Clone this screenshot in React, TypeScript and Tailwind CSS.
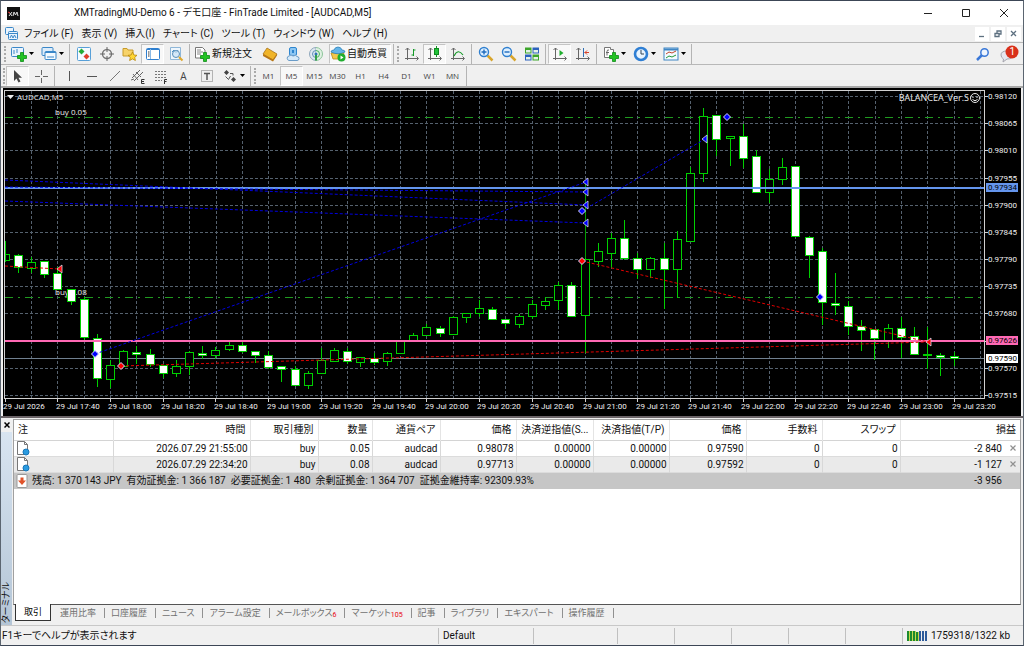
import { ReactNode } from "react";

type Candle = [high: number, top: number, bottom: number, low: number, filled?: 1];

// high, body top, body bottom, low; 1 = bearish (filled) body
const CANDLES: Candle[] = [
  [241, 254, 260, 261], [254, 255, 267, 272, 1], [257, 262, 268, 272], [261, 261, 274, 277, 1],
  [267, 273, 289, 289, 1], [289, 289, 301, 304, 1], [297, 299, 337, 340, 1], [334, 338, 378, 386, 1],
  [360, 365, 379, 387], [350, 351, 366, 366], [346, 352, 354, 363, 1], [349, 354, 364, 366, 1],
  [365, 365, 373, 377, 1], [360, 366, 373, 376], [351, 352, 366, 374], [346, 353, 355, 358, 1],
  [347, 350, 355, 358], [342, 345, 349, 350], [341, 345, 351, 352, 1], [351, 351, 355, 362, 1],
  [351, 355, 367, 368, 1], [366, 366, 369, 381, 1], [366, 369, 385, 385, 1], [371, 373, 385, 388],
  [348, 360, 373, 373], [348, 350, 361, 361], [348, 351, 361, 363, 1], [357, 357, 362, 366],
  [353, 358, 362, 364, 1], [352, 353, 361, 365], [341, 341, 353, 353], [333, 335, 340, 340],
  [324, 327, 335, 335], [326, 328, 333, 336, 1], [316, 317, 334, 334], [313, 313, 317, 322],
  [300, 308, 313, 316], [307, 309, 319, 319, 1], [319, 319, 323, 328, 1], [314, 316, 324, 327],
  [300, 304, 316, 318], [297, 301, 305, 309], [282, 285, 300, 309], [282, 285, 316, 316, 1],
  [180, 259, 315, 352], [243, 251, 261, 266], [233, 238, 253, 267], [220, 238, 258, 259, 1],
  [253, 258, 269, 278, 1], [257, 258, 269, 277], [243, 258, 269, 308, 1], [231, 239, 269, 297],
  [167, 173, 241, 241], [108, 116, 173, 181], [115, 115, 139, 155, 1], [136, 136, 138, 165],
  [124, 136, 158, 167, 1], [150, 156, 192, 192, 1], [169, 179, 192, 202], [158, 167, 179, 184],
  [166, 166, 236, 236, 1], [236, 237, 255, 277, 1], [248, 251, 302, 324, 1], [273, 303, 305, 314, 1],
  [301, 306, 326, 334, 1], [320, 326, 330, 350, 1], [329, 329, 338, 359, 1], [324, 328, 340, 347],
  [317, 328, 337, 357, 1], [327, 336, 354, 354, 1], [327, 354, 355, 368], [353, 355, 357, 375, 1],
  [352, 356, 358, 365, 1],
];

const TIMES = [
  "29 Jul 2026", "29 Jul 17:40", "29 Jul 18:00", "29 Jul 18:20", "29 Jul 18:40", "29 Jul 19:00",
  "29 Jul 19:20", "29 Jul 19:40", "29 Jul 20:00", "29 Jul 20:20", "29 Jul 20:40", "29 Jul 21:00",
  "29 Jul 21:20", "29 Jul 21:40", "29 Jul 22:00", "29 Jul 22:20", "29 Jul 22:40", "29 Jul 23:00",
  "29 Jul 23:20",
];

const PRICES = [
  "0.98120", "0.98065", "0.98010", "0.97955", "0.97900", "0.97845",
  "0.97790", "0.97735", "0.97680", "", "0.97570", "0.97515",
];

const TRADES = [
  { color: "#0000e0", d: "M5 180L586 205M5 201L586 223M5 187L586 192M95 354L586 182M582 211L705 139" },
  { color: "#e00000", d: "M5 266L59 269M121 366L928 342M582 261L928 342" },
];

const ENTRIES = [
  [95, 354, "#0000ff"], [582, 211, "#0000ff"], [727, 117, "#0000ff"], [820, 297, "#0000ff"],
  [121, 366, "#ff0000"], [582, 261, "#ff0000"],
] as const;

const EXITS = [
  [586, 182, "#0000ff"], [586, 192, "#0000ff"], [586, 205, "#0000ff"], [586, 223, "#0000ff"],
  [705, 139, "#0000ff"], [60, 269, "#ff0000"], [929, 342, "#ff0000"],
] as const;

function Chart() {
  const gridX = Array.from({ length: 37 }, (_, i) => Math.round(31 + i * 26.36) + 0.5);
  const gridY = Array.from({ length: 12 }, (_, i) => Math.round(96 + i * 27.18) + 0.5);
  return (
    <svg
      viewBox="3 88 1018 328"
      className="block w-full bg-black font-['Roboto',sans-serif] text-[8px]"
      role="img"
      aria-label="AUDCAD,M5"
    >
      <g shapeRendering="crispEdges" fill="none">
        <g stroke="#55616e" strokeDasharray="3 2">
          {gridX.map((x) => <path key={x} d={`M${x} 91V398`} />)}
          {gridY.map((y) => <path key={y} d={`M5 ${y}H983`} />)}
        </g>
        <path d="M5 117.500H980M5 297.500H980" stroke="#1f9a1f" strokeDasharray="8 5 2 5" />
        <path d="M5 358.500H984" stroke="#708090" />
      </g>

      <g fill="#ededed" className="font-['Open_Sans',sans-serif]">
        <path d="M7 95h7l-3.500 4z" />
        <text x="17" y="100">AUDCAD,M5</text>
        <text x="55" y="115">buy 0.05</text>
        <text x="55" y="295">buy 0.08</text>
        <text x="969" y="101" textAnchor="end" className="text-[9px]">BALANCEA_Ver.S</text>
      </g>
      <g fill="none" stroke="#e8e8e8">
        <circle cx="975" cy="98" r="4.500" />
        <path d="M973 96.500v1.500M977 96.500v1.500M972.500 99.500q2.500 2.500 5 0" />
      </g>

      <g shapeRendering="crispEdges">
        {CANDLES.map(([high, top, bottom, low, filled], i) => {
          const x = Math.round(4.6 + i * 13.18);
          const left = Math.max(x - 4, 5);
          return (
            <g key={i} stroke="#00d000">
              <path d={`M${x + 0.5} ${high}V${low + 1}`} />
              <rect
                x={left + 0.5}
                y={top + 0.5}
                width={x + 4 - left}
                height={Math.max(bottom - top, 1)}
                fill={filled ? "#ffffff" : "#000000"}
              />
            </g>
          );
        })}
        <path d="M585.500 180V258" stroke="#00a000" />
        <path d="M5 187.500H984" stroke="#6495ed" strokeWidth="2" />
        <path d="M5 340.500H984" stroke="#ff69b4" strokeWidth="2" />
      </g>

      {TRADES.map((t) => (
        <path key={t.color} d={t.d} stroke={t.color} strokeDasharray="3 2" fill="none" />
      ))}
      {ENTRIES.map(([x, y, color]) => (
        <path
          key={`${x}-${y}`}
          d={`M${x - 3.5} ${y}l3.500 -3.500 3.500 3.500 -3.500 3.500z`}
          fill={color}
          stroke="#d8d8ff"
        />
      ))}
      {EXITS.map(([x, y, color]) => (
        <path key={`${x}-${y}`} d={`M${x - 3} ${y}l5 -4v8z`} fill={color} stroke="#d8d8e8" strokeWidth="0.8" />
      ))}

      <g shapeRendering="crispEdges" stroke="#d0d0d0" fill="none">
        <path d="M4.500 90.500H984.500V398.500H4.500z" />
        {gridY.map((y) => <path key={y} d={`M985 ${y}h3`} />)}
        {TIMES.map((t, i) => <path key={t} d={`M${Math.round(4.6 + i * 52.72) + 0.5} 399v3`} />)}
      </g>
      <g fill="#f0f0f0">
        {PRICES.map((p, i) => <text key={i} x="988" y={Math.round(99 + i * 27.18)}>{p}</text>)}
        {TIMES.map((t, i) => <text key={t} x={Math.round(3 + i * 52.72)} y="409">{t}</text>)}
      </g>
      <rect x="986" y="183" width="32" height="9" fill="#6495ed" />
      <rect x="986" y="336" width="32" height="9" fill="#ff69b4" />
      <rect x="986" y="354" width="32" height="9" fill="#ffffff" />
      <text x="988" y="190">0.97934</text>
      <text x="988" y="343">0.97626</text>
      <text x="988" y="361">0.97590</text>
    </svg>
  );
}

function Svg({ children }: { children: ReactNode }) {
  return (
    <svg viewBox="0 0 16 16" className="size-4 shrink-0" fill="none" stroke="#555" aria-hidden="true">
      {children}
    </svg>
  );
}

const Plus = () => (
  <path d="M9.500 6.500h3v3h3v3h-3v3h-3v-3h-3v-3h3z" fill="#22c322" stroke="#0d8a17" strokeWidth="0.8" />
);
const Axes = () => <path d="M3.500 2v12M1.500 4l2-2 2 2M1 12.500h13M12.500 10.500l2 2-2 2" stroke="#666" />;

const ICONS = {
  newChart: <Svg><rect x="0.500" y="1.500" width="12" height="9" rx="1" fill="#eaf4fd" stroke="#3a87c8" /><path d="M3 4v4M6 3v4" stroke="#3a87c8" /><Plus /></Svg>,
  profiles: <Svg><rect x="1" y="1.500" width="11" height="8" rx="1" fill="#dcecfa" stroke="#3a87c8" /><rect x="4" y="5.500" width="11" height="8" rx="1" fill="#f4faff" stroke="#3a87c8" /><path d="M4 6.500h11M6 11h7" stroke="#3a87c8" /></Svg>,
  market: <Svg><rect x="1.500" y="1.500" width="13" height="13" rx="1" fill="#f6fbff" stroke="#58a0d8" /><path d="M5.500 2.500L8.500 5.500 5.500 8.500 2.500 5.500z" fill="#23ad35" stroke="none" /><path d="M10.500 7.500l3 3-3 3-3-3z" fill="#e0402a" stroke="none" /></Svg>,
  crosshair: <Svg><circle cx="8" cy="8" r="4.500" stroke="#777" strokeWidth="1.400" /><path d="M8 1v5M8 10v5M1 8h5M10 8h5" stroke="#666" /></Svg>,
  navigator: <Svg><path d="M1 2.500h4l1 1.500h5v6H1z" fill="#f7d36a" stroke="#c79a2a" /><path d="M10.500 6l1.400 3 3.100.3-2.300 2.100.7 3.100-2.900-1.600-2.900 1.600.7-3.100L6 9.300l3.100-.3z" fill="#ffd633" stroke="#b8860b" strokeWidth="0.8" /></Svg>,
  terminal: <Svg><rect x="1.500" y="2.500" width="13" height="11" rx="1" fill="#fff" stroke="#2f7fcf" /><path d="M2 3.500h12" stroke="#2f7fcf" /><path d="M5.500 3v10" stroke="#8ab9e6" /><path d="M3 6h1.500M3 8h1.500M3 10h1.500" stroke="#333" /></Svg>,
  tester: <Svg><path d="M2.500 1.500h10v12h-10z" fill="#eef6fd" stroke="#8fb7d8" /><path d="M4 6l2-2 2 3 2-3" stroke="#4a8fc8" /><circle cx="8" cy="8" r="3.500" fill="#cfe6f8" fillOpacity="0.8" stroke="#5a8fb8" /><path d="M11 11l3.500 3.500" stroke="#e0a82a" strokeWidth="2" /></Svg>,
  order: <Svg><path d="M1.500 1.500h7l2.500 2.500v8H1.500z" fill="#fff" stroke="#777" /><path d="M3 4h4M3 6h6M3 8h4" stroke="#888" /><Plus /></Svg>,
  book: <Svg><path d="M5 2l10 6-4 6L1 8z" fill="#f0b429" stroke="#a8741a" strokeWidth="0.8" /><path d="M1 8v2l10 5.500 4-6V8l-4 5.500z" fill="#b87614" stroke="none" /></Svg>,
  cloud: <Svg><rect x="4.500" y="1.500" width="7" height="8" rx="1.500" fill="#8cc6f2" stroke="#2e86cf" /><path d="M7 4h2v3H7z" fill="#2e86cf" stroke="none" /><path d="M4 14.500a2.300 2.300 0 010-4.500q2-2 4 0 3-1.500 4 .5a2 2 0 010 4z" fill="#d6eaf9" stroke="#6a9cc8" /></Svg>,
  signal: <Svg><path d="M8 1.500a6.500 6.500 0 000 13V8z" stroke="#8fa7bb" fill="#dfe9f1" /><path d="M8 1.500a6.500 6.500 0 010 13" stroke="#8cc59a" fill="#dff0e2" /><path d="M8 4.500a3.500 3.500 0 010 7" stroke="#49b45c" /><path d="M8 4.500a3.500 3.500 0 000 7" stroke="#5d8fb8" /><circle cx="8" cy="8" r="1.500" fill="#2d74b5" stroke="none" /><path d="M8 9v5.500" stroke="#35a24a" strokeWidth="2" /></Svg>,
  auto: <Svg><path d="M1 7l2 6h8l3-6z" fill="#f3c64a" stroke="#b98a1c" strokeWidth="0.8" /><path d="M1 6q0-2 3-2 1-3 4-3t4 3q3 0 3 2-7 3.500-14 0z" fill="#63b4e8" stroke="#2c80b8" strokeWidth="0.8" /><circle cx="11.500" cy="11.500" r="4" fill="#1fae2e" stroke="none" /><path d="M10.500 9.500v4l3-2z" fill="#fff" stroke="none" /></Svg>,
  bars: <Svg><Axes /><path d="M9.500 3v7M9.500 4h2M7.500 9h2" stroke="#159a28" /></Svg>,
  candles: <Svg><Axes /><path d="M9.500 0v11" stroke="#159a28" /><rect x="7.500" y="2.500" width="4" height="6" fill="#22c33a" stroke="#0f8a1e" /></Svg>,
  line: <Svg><Axes /><path d="M4 10q4-8 9-1" stroke="#159a28" strokeWidth="1.200" /></Svg>,
  zoomIn: <Svg><path d="M9.500 9.500l5 5" stroke="#d8a52c" strokeWidth="2.500" /><circle cx="6" cy="6" r="4.500" fill="#dff0ff" stroke="#2f7fcf" strokeWidth="1.400" /><path d="M6 3.500v5M3.500 6h5" stroke="#1f6bbd" strokeWidth="1.400" /></Svg>,
  zoomOut: <Svg><path d="M9.500 9.500l5 5" stroke="#d8a52c" strokeWidth="2.500" /><circle cx="6" cy="6" r="4.500" fill="#dff0ff" stroke="#2f7fcf" strokeWidth="1.400" /><path d="M3.500 6h5" stroke="#1f6bbd" strokeWidth="1.400" /></Svg>,
  tile: <Svg><g stroke="none"><path d="M1 1.500h6.500v6H1zM8.500 8.500H15v6H8.500z" fill="#3da52a" /><path d="M8.500 1.500H15v6H8.500zM1 8.500h6.500v6H1z" fill="#2c62bd" /><path d="M2 4h4.500v2.500H2zM9.500 4H14v2.500H9.500zM2 11h4.500v2.500H2zM9.500 11H14v2.500H9.500z" fill="#e4f1e8" /></g></Svg>,
  scroll: <Svg><Axes /><path d="M7.500 4v6l4-3z" fill="#1fae2e" stroke="none" /></Svg>,
  shift: <Svg><Axes /><path d="M8.500 2v9" stroke="#2f6fb5" /><path d="M14 6.500H9.500M12 4.500l-2 2 2 2" stroke="#d5432b" /></Svg>,
  indicator: <Svg><path d="M1.500 1.500h6v2h3v8h-9z" fill="#fff" stroke="#777" /><path d="M6 4q-2-.5-2 1.500v4M3 6.500h3" stroke="#666" /><Plus /></Svg>,
  clock: <Svg><circle cx="8" cy="8" r="6" fill="#e8f4ff" stroke="#2f7fd4" strokeWidth="2.600" /><path d="M8 4v4h3" stroke="#345" /></Svg>,
  template: <Svg><rect x="1" y="2" width="14" height="12" fill="#f4faff" stroke="#3f86c4" /><path d="M1 3.500h14" stroke="#3f86c4" strokeWidth="2" /><path d="M3 8l3-2 3 1 4-2" stroke="#c0472d" /><path d="M3 12l3-2 3 1 4-2" stroke="#23993a" /></Svg>,
  cursor: <Svg><path d="M4 2v11l2.500-2.500 2 4 2-1-2-3.700H12z" fill="#444" stroke="none" /></Svg>,
  cross: <Svg><path d="M8.500 2v5M8.500 10v5M2 8.500h5M10 8.500h5" stroke="#666" /></Svg>,
  vline: <Svg><path d="M8.500 3v10" /></Svg>,
  hline: <Svg><path d="M3 8.500h10" /></Svg>,
  trend: <Svg><path d="M3 13L13 3" stroke="#777" /></Svg>,
  channel: <Svg><path d="M2 10l8-8M4 13l9-9M3 6l5 6M6 4l5 5M1 12l3-1" stroke="#666" /><path d="M14.500 11.500h-3v4h3M11.500 13.500h2.500" stroke="#333" /></Svg>,
  fibo: <Svg><path d="M2 3.500h12M2 6.500h12M2 9.500h12M2 12.500h7" stroke="#777" strokeDasharray="2 1" /><path d="M14 11.500h-2.500V16M11.500 13.500h2" stroke="#333" /></Svg>,
  label: <Svg><rect x="2.500" y="2.500" width="11" height="11" stroke="#777" strokeDasharray="1 1" /><path d="M5 5.500h6M8 5.500V12" strokeWidth="1.500" /></Svg>,
  arrows: <Svg><path d="M4.500 2l2.500 2.500L4.500 7 2 4.500zM11.500 9l2.500 2.500-2.500 2.500L9 11.500z" fill="#444" stroke="none" /><path d="M8 5.500h3v2M3.500 8.500l3 3 2-3.500" /></Svg>,
  doc: <Svg><path d="M2.500 1.500h7l3 3v10h-10z" fill="#fff" stroke="#777" /><path d="M9.500 1.500v3h3" stroke="#777" /><circle cx="11" cy="12" r="3" fill="#2a9be0" stroke="#1976b8" /></Svg>,
  balance: <Svg><rect x="3" y="1.500" width="10" height="13" rx="1" fill="#fff" stroke="#999" /><path d="M6.500 4.500h3v3H12L8 12 4 7.500h2.500z" fill="#e0532a" stroke="none" /></Svg>,
};

type IconName = keyof typeof ICONS;

function Tool({ icon, label, pressed, caret }: { icon: IconName; label: string; pressed?: boolean; caret?: boolean }) {
  return (
    <button
      aria-label={label}
      aria-pressed={pressed}
      className={`flex h-5 shrink-0 items-center justify-center gap-0.5 ${caret ? "w-[30px]" : "w-[23px]"} ${
        pressed ? "border border-[#c4c4c4] border-r-white border-b-white bg-[#f8f8f8]" : ""
      }`}
    >
      {ICONS[icon]}
      {caret && <Caret />}
    </button>
  );
}

const Caret = () => (
  <svg viewBox="0 0 5 3" className="w-[5px] shrink-0" aria-hidden="true"><path d="M0 0h5L2.500 3z" /></svg>
);
const Sep = () => <span className="mx-0.5 h-5 w-px shrink-0 bg-[#b4b4b4]" />;
const Grip = () => <span className="mx-px h-4 w-0.5 shrink-0 border-l-2 border-dotted border-[#aaa]" />;

const MENUS = ["ファイル (F)", "表示 (V)", "挿入(I)", "チャート (C)", "ツール (T)", "ウィンドウ (W)", "ヘルプ (H)"];
const PERIODS = ["M1", "M5", "M15", "M30", "H1", "H4", "D1", "W1", "MN"];

const TABS: { name: string; count?: number }[] = [
  { name: "取引" }, { name: "運用比率" }, { name: "口座履歴" }, { name: "ニュース" }, { name: "アラーム設定" },
  { name: "メールボックス", count: 6 }, { name: "マーケット", count: 105 }, { name: "記事" },
  { name: "ライブラリ" }, { name: "エキスパート" }, { name: "操作履歴" },
];

const HEADERS = ["時間", "取引種別", "数量", "通貨ペア", "価格", "決済逆指値(S...", "決済指値(T/P)", "価格", "手数料", "スワップ"];
const ORDERS = [
  { cells: ["2026.07.29 21:55:00", "buy", "0.05", "audcad", "0.98078", "0.00000", "0.00000", "0.97590", "0", "0"], profit: "-2 840" },
  { cells: ["2026.07.29 22:34:20", "buy", "0.08", "audcad", "0.97713", "0.00000", "0.00000", "0.97592", "0", "0"], profit: "-1 127" },
];

function Terminal() {
  return (
    <section className="flex flex-1 border-t-2 border-[#6b6468] bg-[#f0f0f0]">
      <div className="flex w-[11px] shrink-0 flex-col items-center justify-between bg-linear-to-b from-[#dbe7f3] to-[#b4c5d6] pb-0.5">
        <button aria-label="閉じる" className="flex h-3.5 w-full items-center justify-center bg-[#f0f0f0]">
          <svg viewBox="0 0 6 6" className="size-1.5" stroke="#000" strokeWidth="1.500"><path d="M0.500 0.500l5 5M5.500 0.500l-5 5" /></svg>
        </button>
        <span className="rotate-180 text-[9px] leading-[11px] [writing-mode:vertical-rl]"><span className="[text-orientation:sideways]">ターミナル</span></span>
      </div>
      <div className="flex min-w-0 flex-1 flex-col pt-px pr-0.5 pl-px">
        <div className="flex-1 border border-[#a0a0a0] border-b-[#555] bg-white">
          <table className="w-full table-fixed border-collapse text-right leading-[15px]">
            <colgroup>
              <col className="w-[99px]" />
              <col className="w-[137px]" />
              <col className="w-[68px]" />
              <col className="w-[54px]" />
              <col className="w-[68px]" />
              <col className="w-[76px]" />
              <col className="w-[77px]" />
              <col className="w-[76px]" />
              <col className="w-[77px]" />
              <col className="w-[76px]" />
              <col className="w-[78px]" />
              <col />
            </colgroup>
            <thead>
              <tr className="h-5 border-b border-[#d4d4d4]">
                <th className="border-r border-[#e4e4e4] pl-1 text-left font-normal">注</th>
                {HEADERS.map((h, i) => (
                  <th key={i} className="border-r border-[#e4e4e4] pr-1 font-normal whitespace-nowrap">{h}</th>
                ))}
                <th className="pr-1 font-normal">損益</th>
              </tr>
            </thead>
            <tbody>
              {ORDERS.map((o) => (
                <tr key={o.profit} className="border-b border-[#dcdcdc] even:bg-[#eaeaea]">
                  <td className="border-r border-[#d8d8d8] pl-px">
                    <div className="flex h-[15px] items-center">{ICONS.doc}</div>
                  </td>
                  {o.cells.map((c, i) => (
                    <td key={i} className="border-r border-[#d8d8d8] pr-0.5 whitespace-nowrap">{c}</td>
                  ))}
                  <td>
                    <div className="flex items-center justify-end gap-2 pr-1">
                      {o.profit}
                      <button aria-label="決済">
                        <svg viewBox="0 0 6 6" className="size-1.5" stroke="#909090" strokeWidth="1.200"><path d="M0.500 0.500l5 5M5.500 0.500l-5 5" /></svg>
                      </button>
                    </div>
                  </td>
                </tr>
              ))}
              <tr className="bg-[#c6c6c6]">
                <td colSpan={11} className="text-left">
                  <div className="flex items-center gap-0.5 whitespace-pre">
                    {ICONS.balance}
                    残高: 1 370 143 JPY  有効証拠金: 1 366 187  必要証拠金: 1 480  余剰証拠金: 1 364 707  証拠金維持率: 92309.93%
                  </div>
                </td>
                <td className="pr-[18px]">-3 956</td>
              </tr>
            </tbody>
          </table>
        </div>
        <div role="tablist" className="flex h-[20px] items-start text-[9px] text-[#707070]">
          {TABS.map((t, i) => (
            <button
              key={t.name}
              role="tab"
              aria-selected={i === 0}
              className={
                i === 0
                  ? "-mt-px mr-[3px] ml-0.5 h-[17px] w-9 border border-t-0 border-[#333] bg-white text-black"
                  : "flex h-4 items-center px-1.5 whitespace-nowrap"
              }
            >
              {t.name}
              {t.count && <sub className="text-[7px] text-red-600">{t.count}</sub>}
              {i > 0 && <span className="ml-2 -mr-1.5 h-2.5 w-px bg-[#909090]" />}
            </button>
          ))}
        </div>
      </div>
    </section>
  );
}

export default function App() {
  return (
    <div className="flex min-h-screen flex-col border border-t-[#3c4656] border-r-[#5b6570] border-b-[#3c4656] border-l-[#5b6570] bg-[#f0f0f0] font-['Roboto','Noto_Sans_CJK_JP',sans-serif] text-[10px] leading-4 text-[#111] [font-feature-settings:'palt']">
      <header className="flex h-6 items-center bg-white pl-1.5">
        <svg viewBox="0 0 13 13" className="size-[13px]" aria-hidden="true">
          <path d="M0 0h13v13H0z" fill="#111" />
          <path d="M2 5l3 4M5 5L2 9M6 9l1-4 1.500 3L10 5l1 4" stroke="#ddd" fill="none" />
          <path d="M1 5l2 1" stroke="#d22" />
        </svg>
        <h1 className="ml-[54px] flex-1 text-[10px]">XMTradingMU-Demo 6 - デモ口座 - FinTrade Limited - [AUDCAD,M5]</h1>
        <button aria-label="最小化" className="flex w-[38px] justify-center"><svg viewBox="0 0 10 10" className="size-2.5" stroke="#222"><path d="M1 5.500h8" /></svg></button>
        <button aria-label="最大化" className="flex w-[38px] justify-center"><svg viewBox="0 0 10 10" className="size-2.5" stroke="#222" fill="none"><path d="M1.500 1.500h7v7h-7z" /></svg></button>
        <button aria-label="閉じる" className="flex w-[38px] justify-center"><svg viewBox="0 0 10 10" className="size-2.5" stroke="#222"><path d="M1 1l8 8M9 1l-8 8" /></svg></button>
      </header>

      <nav className="flex h-[18px] items-center border-b border-[#b8b8b8] pl-1">
        <svg viewBox="0 0 13 13" className="size-[13px]" fill="#eaf4fd" stroke="#3a87c8" aria-hidden="true">
          <rect x="0.500" y="0.500" width="8" height="7" rx="1" />
          <rect x="3.500" y="4.500" width="9" height="8" rx="1" />
          <path d="M3.500 6.500h9M5 11l1.500-3L8 11l1.500-3 1.500 3" fill="none" />
        </svg>
        <ul className="ml-1.5 flex flex-1 gap-2">
          {MENUS.map((m) => <li key={m}><button className="whitespace-nowrap">{m}</button></li>)}
        </ul>
        <div className="flex gap-0.5 pr-0.5">
          {["M1 6.500h5", "M1 3.500h4v3H1zM3 3V1h4v3H5", "M1 1l5 5M6 1L1 6"].map((d) => (
            <button key={d} aria-label="ウィンドウ" className="flex size-3.5 items-center justify-center bg-white">
              <svg viewBox="0 0 8 8" className="size-2" fill="none" stroke="#5d7080" strokeWidth="1.300"><path d={d} /></svg>
            </button>
          ))}
        </div>
      </nav>

      <div className="flex h-[22px] items-center border-b border-[#b8b8b8] pl-0.5">
        <Grip />
        <Tool icon="newChart" label="新規チャート" caret />
        <Tool icon="profiles" label="プロファイル" caret />
        <Sep />
        <Tool icon="market" label="気配値表示" />
        <Tool icon="crosshair" label="データウィンドウ" />
        <Tool icon="navigator" label="ナビゲーター" />
        <Tool icon="terminal" label="ターミナル" pressed />
        <Tool icon="tester" label="ストラテジーテスター" />
        <Sep />
        <button className="flex h-5 w-[66px] items-center gap-0.5 pl-0.5 whitespace-nowrap">{ICONS.order}新規注文</button>
        <Tool icon="book" label="メタエディター" />
        <Tool icon="cloud" label="クラウド" />
        <Tool icon="signal" label="シグナル" />
        <button aria-pressed="true" className="ml-0.5 flex h-5 w-[62px] items-center gap-px border border-[#c4c4c4] border-r-white border-b-white bg-[#f8f8f8] whitespace-nowrap">{ICONS.auto}自動売買</button>
        <Sep />
        <Grip />
        <Tool icon="bars" label="バーチャート" />
        <Tool icon="candles" label="ローソク足" pressed />
        <Tool icon="line" label="ラインチャート" />
        <Sep />
        <Tool icon="zoomIn" label="拡大" />
        <Tool icon="zoomOut" label="縮小" />
        <Tool icon="tile" label="整列" />
        <Sep />
        <Tool icon="scroll" label="自動スクロール" pressed />
        <Tool icon="shift" label="チャートシフト" />
        <Sep />
        <Tool icon="indicator" label="インディケータ" caret />
        <Tool icon="clock" label="時間軸" caret />
        <Tool icon="template" label="定型チャート" caret />
        <Sep />
        <button aria-label="検索" className="ml-auto size-4">
          <svg viewBox="0 0 16 16" fill="#eef5ff" stroke="#3a78d8"><path d="M7 9l-5 5" strokeWidth="2.500" /><circle cx="9.500" cy="6.500" r="3.700" strokeWidth="1.500" /></svg>
        </button>
        <button aria-label="通知" className="relative mr-1 ml-2 w-5">
          <svg viewBox="0 0 20 18" className="h-[18px] w-5">
            <path d="M2 10q0-4 6-4t6 4-6 4l-4 3 .5-3Q2 12.500 2 10z" fill="#e6e6ee" stroke="#a5a5ad" />
            <circle cx="13" cy="7" r="6.500" fill="#d9301a" />
          </svg>
          <span className="absolute top-px right-1 text-[10px] leading-3 text-white">1</span>
        </button>
      </div>

      <div className="flex h-[23px] items-center border-b-2 border-[#a8a8a8] pl-px font-['Open_Sans',sans-serif] text-[8px] text-[#444]">
        <Grip />
        <Tool icon="cursor" label="カーソル" pressed />
        <Tool icon="cross" label="十字カーソル" />
        <Sep />
        <Tool icon="vline" label="垂直線" />
        <Tool icon="hline" label="水平線" />
        <Tool icon="trend" label="トレンドライン" />
        <Tool icon="channel" label="チャネル" />
        <Tool icon="fibo" label="フィボナッチ" />
        <button className="w-[23px] text-[10px]">A</button>
        <Tool icon="label" label="テキストラベル" />
        <Tool icon="arrows" label="矢印" caret />
        <Sep />
        <Grip />
        {PERIODS.map((p) => (
          <button
            key={p}
            aria-pressed={p === "M5"}
            className={`h-5 w-[23px] ${p === "M5" ? "border border-[#c4c4c4] border-r-white border-b-white bg-[#f8f8f8]" : ""}`}
          >
            {p}
          </button>
        ))}
        <Sep />
      </div>

      <main className="flex flex-1 flex-col">
        <div className="mr-0.5 ml-0.5">
          <Chart />
        </div>
        <Terminal />
      </main>

      <footer className="flex h-5 items-center border-t border-[#c8c8c8]">
        <p className="flex-1 pl-px">F1キーでヘルプが表示されます</p>
        <p className="h-4 w-[95px] border-l border-[#c0c0c0] pl-1">Default</p>
        <span className="h-4 w-[84px] border-l border-[#c0c0c0]" />
        <span className="h-4 w-[57px] border-l border-[#c0c0c0]" />
        <span className="h-4 w-[57px] border-l border-[#c0c0c0]" />
        <span className="h-4 w-[57px] border-l border-[#c0c0c0]" />
        <span className="h-4 w-[57px] border-l border-[#c0c0c0]" />
        <span className="h-4 w-[57px] border-l border-[#c0c0c0]" />
        <p className="flex h-4 w-[121px] items-center gap-1 border-l border-[#c0c0c0] pl-1">
          <svg viewBox="0 0 20 10" className="h-2.5 w-5" aria-hidden="true">
            <path d="M1 0v10M4 0v10M7 0v10M10 1v9" stroke="#1d8a2e" strokeWidth="2" />
            <path d="M2.500 0v10M5.500 0v10M8.500 0v10M11.500 1v9" stroke="#c8d850" />
            <path d="M13 0v10M16 0v10M19 0v10" stroke="#2c5a9a" strokeWidth="2" />
          </svg>
          1759318/1322 kb
        </p>
      </footer>
    </div>
  );
}
